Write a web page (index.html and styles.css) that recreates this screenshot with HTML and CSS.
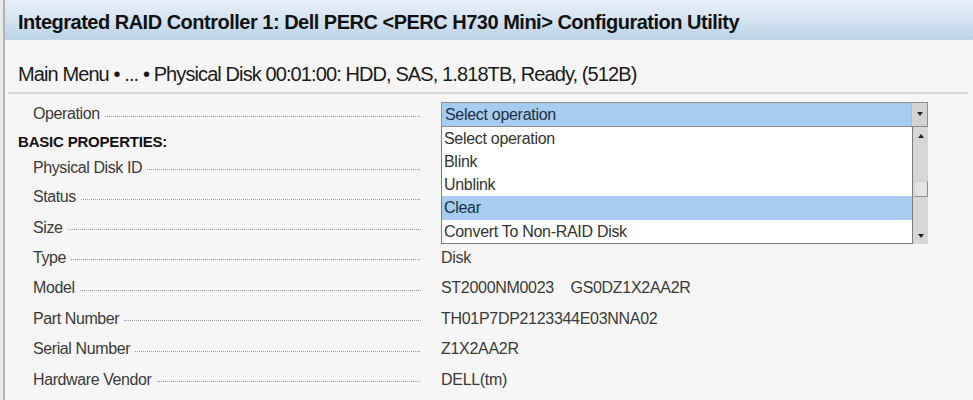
FILE: index.html
```html
<!DOCTYPE html>
<html lang="en">
<head>
  <meta charset="UTF-8">
  <title>Integrated RAID Controller 1 Configuration Utility</title>
  <link rel="stylesheet" href="styles.css">
</head>
<body>
  <div class="frame">

    <!-- Title bar -->
    <div class="titlebar">Integrated RAID Controller 1: Dell PERC &lt;PERC H730 Mini&gt; Configuration Utility</div>

    <!-- Breadcrumb -->
    <div class="crumb">Main Menu &bull; ... &bull; Physical Disk 00:01:00: HDD, SAS, 1.818TB, Ready, (512B)</div>

    <div class="form">
      <div class="row op-row">
        <div class="label"><span>Operation</span><i class="dots"></i></div>
        <div class="value">
          <div class="select">
            <span class="select-text">Select operation</span>
            <span class="select-btn"><b class="arrow-down"></b></span>
          </div>
          <div class="dropdown">
            <ul class="options">
              <li>Select operation</li>
              <li>Blink</li>
              <li>Unblink</li>
              <li class="selected">Clear</li>
              <li>Convert To Non-RAID Disk</li>
            </ul>
            <div class="scrollbar">
              <b class="arrow-up"></b>
              <span class="thumb"></span>
              <b class="arrow-down"></b>
            </div>
          </div>
        </div>
      </div>

      <div class="section">BASIC PROPERTIES:</div>

      <div class="row first">
        <div class="label"><span>Physical Disk ID</span><i class="dots"></i></div>
        <div class="value"></div>
      </div>
      <div class="row">
        <div class="label"><span>Status</span><i class="dots"></i></div>
        <div class="value"></div>
      </div>
      <div class="row">
        <div class="label"><span>Size</span><i class="dots"></i></div>
        <div class="value"></div>
      </div>
      <div class="row">
        <div class="label"><span>Type</span><i class="dots"></i></div>
        <div class="value">Disk</div>
      </div>
      <div class="row">
        <div class="label"><span>Model</span><i class="dots"></i></div>
        <div class="value">ST2000NM0023&nbsp;&nbsp;&nbsp;&nbsp;GS0DZ1X2AA2R</div>
      </div>
      <div class="row">
        <div class="label"><span>Part Number</span><i class="dots"></i></div>
        <div class="value">TH01P7DP2123344E03NNA02</div>
      </div>
      <div class="row">
        <div class="label"><span>Serial Number</span><i class="dots"></i></div>
        <div class="value">Z1X2AA2R</div>
      </div>
      <div class="row">
        <div class="label"><span>Hardware Vendor</span><i class="dots"></i></div>
        <div class="value">DELL(tm)</div>
      </div>
    </div>

  </div>
</body>
</html>
```

FILE: styles.css
```css
body {
  margin: 0;
  padding: 0;
  height: 400px;
  background: #e9e9e9;
  font-family: 'Liberation Sans', Arial, sans-serif;
  overflow: hidden;
}

.frame {
  margin-left: 3px;
  height: 400px;
  background: #f6f6f6;
  border-left: 2px solid #b3b3b3;
}

.titlebar {
  height: 40px;
  box-sizing: border-box;
  padding: 11px 0 0 13px;
  background: linear-gradient(#e7eff7, #d3e3f1 55%, #bad2e7);
  border-bottom: 1px solid #c9d6e2;
  font-size: 20px;
  font-weight: bold;
  letter-spacing: -0.5px;
  color: #111;
  white-space: nowrap;
}

.crumb {
  margin: 0 5px 0 3px;
  height: 54px;
  box-sizing: border-box;
  padding: 23px 0 0 10px;
  border-bottom: 2px solid #d6d6d6;
  font-size: 20px;
  letter-spacing: -0.9px;
  color: #1a1a1a;
  white-space: nowrap;
}

.form {
  padding-top: 7px;
  font-size: 16px;
  color: #3a3a3a;
}

.row {
  display: grid;
  grid-template-columns: 416px 507px;
  height: 30.4px;
  align-items: center;
}

.label {
  display: flex;
  align-items: center;
  padding-left: 28px;
}

.label span {
  letter-spacing: -0.4px;
  padding-right: 5px;
}

.dots {
  flex: 1;
  height: 1px;
  margin-top: 4px;
  background-image: linear-gradient(to right, #9a9a9a 1px, transparent 1px);
  background-size: 2px 1px;
}

.value {
  padding-left: 20px;
  letter-spacing: -0.3px;
  position: relative;
}

.op-row {
  height: 26px;
}

.section {
  height: 26px;
  line-height: 30px;
  padding-left: 13px;
  font-weight: bold;
  font-size: 15px;
  letter-spacing: -0.2px;
  color: #111;
}

.row.first {
  height: 29px;
}

/* select + open list */
.select {
  display: flex;
  height: 25px;
  box-sizing: border-box;
  border: 1px solid #8f8f8f;
  background: #a6cdf0;
  color: #1d2f44;
}

.select-text {
  flex: 1;
  padding-left: 3px;
  line-height: 23px;
}

.select-btn {
  width: 15px;
  background: #d3d3d3;
  border-left: 1px solid #b8b8b8;
  display: flex;
  justify-content: center;
  align-items: center;
}

.arrow-down,
.arrow-up {
  width: 0;
  height: 0;
  border-left: 3px solid transparent;
  border-right: 3px solid transparent;
}

.arrow-down { border-top: 4px solid #222; }
.arrow-up { border-bottom: 4px solid #222; }

.dropdown {
  position: absolute;
  left: 20px;
  right: 0;
  top: 25px;
  height: 117px;
  display: flex;
  z-index: 5;
}

.options {
  flex: 1;
  margin: 0;
  padding: 0;
  list-style: none;
  background: #fff;
  border: 1px solid #7c7c7c;
  border-top: none;
}

.options li {
  height: 23.3px;
  line-height: 24px;
  padding-left: 2px;
  color: #333;
}

.options li.selected {
  background: #a6cdf0;
  color: #1d2f44;
}

.scrollbar {
  width: 15px;
  background: #d7d7d7;
  display: flex;
  flex-direction: column;
  align-items: center;
  padding: 7px 0 6px;
  box-sizing: border-box;
}

.thumb {
  margin: 43px 0 auto;
  width: 14px;
  height: 16px;
  box-sizing: border-box;
  background: #e4e4e4;
  border: 1px solid #8e8e8e;
  border-top-color: #cfcfcf;
  border-left-color: #cfcfcf;
}
```
